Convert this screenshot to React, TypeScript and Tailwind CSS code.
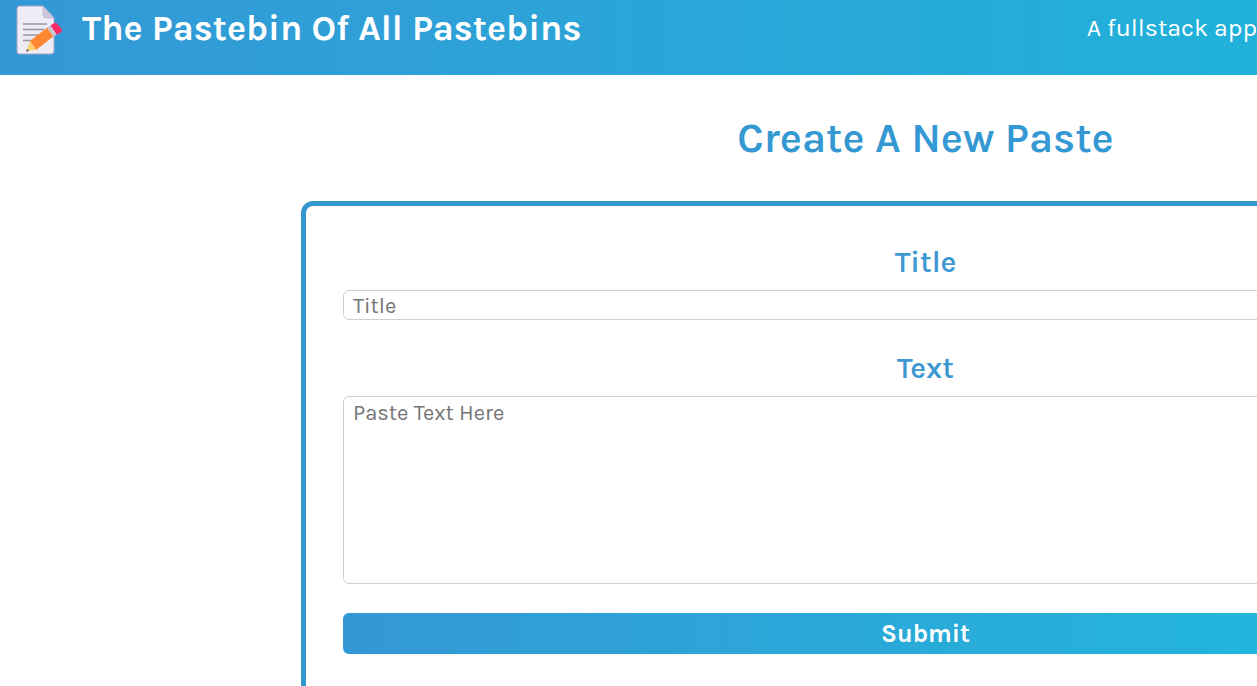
import React from "react";

function NoteIcon() {
  return (
    <svg viewBox="0 0 48 50" className="h-[50px] w-12 shrink-0" aria-hidden="true">
      <path d="M3 1h24l11 12v33q0 3-3 3H3q-2 0-2-3V4q0-3 2-3z" fill="#efecf8" stroke="#a9a5c4" strokeWidth="1" />
      <path d="M27 1l11 12h-8q-3 0-3-3z" fill="#cdc6dc" stroke="#b5adc9" strokeWidth="0.6" />
      <path d="M7 19h24M7 24.500h21M7 30h17M7 35.500h11" stroke="#9795a5" strokeWidth="1.500" fill="none" />
      <path d="M14 36l18-14 6 9-18 14z" fill="#ff8731" />
      <path d="M14 36l-3.500 10 9.500-1z" fill="#ffd06f" />
      <path d="M11 44l-1 2.500 3-.4z" fill="#493b44" />
      <path d="M31 23l3.500-3 6.500 9-3.500 3z" fill="#cfc5d2" />
      <path d="M34.500 20.500l3.500-2.300q2-1 3.500.8l4.200 5q1 1.800-.7 3.200l-4 2.500z" fill="#fc2b63" />
    </svg>
  );
}

export default function App() {
  return (
    <div className="min-h-screen overflow-x-hidden bg-white font-['Karla','Roboto','Liberation_Sans',sans-serif]">
      <header className="flex h-[75px] items-start justify-between bg-linear-to-r from-[#3398d6] to-[#20b1da] pl-4 whitespace-nowrap text-white">
        <div className="flex items-start gap-[18px] pt-[5px]">
          <NoteIcon />
          <h1 className="text-[36px] leading-[46px] font-bold">The Pastebin Of All Pastebins</h1>
        </div>
        <p className="pt-2 text-[25px] leading-10">A fullstack app</p>
      </header>
      <main className="min-w-[1851px] pt-9">
        <h2 className="text-center text-[42px] leading-[54px] font-semibold text-[#3498d3]">Create A New Paste</h2>
        <form className="mx-auto mt-9 w-[1249px] rounded-xl border-[5px] border-[#3498cf] px-[37px] pt-9 pb-10">
          <div className="flex flex-col">
            <label htmlFor="title" className="text-center text-[30px] leading-10 font-semibold text-[#3d97d1]">Title</label>
            <input id="title" placeholder="Title" className="mt-2 h-[30px] rounded-md border border-[#cfcfcf] px-[9px] pt-[2px] text-[22px] placeholder:text-[#757575]" />
          </div>
          <div className="mt-7 flex flex-col">
            <label htmlFor="text" className="text-center text-[30px] leading-10 font-semibold text-[#3d97d1]">Text</label>
            <textarea id="text" placeholder="Paste Text Here" className="mt-2 h-[188px] resize-none rounded-md border border-[#cfcfcf] px-[9px] py-1 text-[22px] leading-6 placeholder:text-[#757575]" />
          </div>
          <button type="submit" className="mt-[29px] h-[41px] w-full rounded-md bg-linear-to-r from-[#3398d6] to-[#19bddc] text-[25px] font-bold text-white">Submit</button>
        </form>
      </main>
    </div>
  );
}
